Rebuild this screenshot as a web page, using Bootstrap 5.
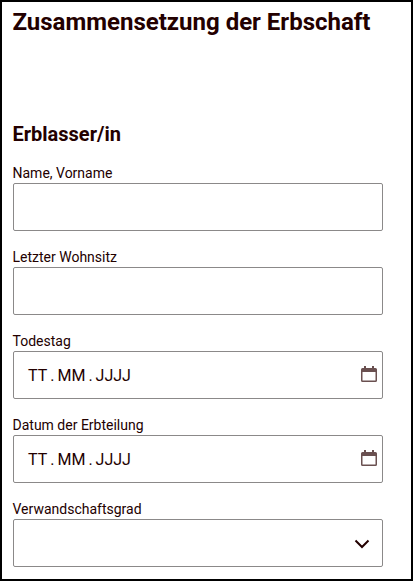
<!DOCTYPE html>
<html lang="de">
<head>
<meta charset="utf-8">
<meta name="viewport" content="width=device-width, initial-scale=1">
<title>Zusammensetzung der Erbschaft</title>
<link href="https://cdn.jsdelivr.net/npm/bootstrap@5.3.0/dist/css/bootstrap.min.css" rel="stylesheet">
<style>
body { font-family: Roboto, "Liberation Sans", sans-serif; color: #230000; }
.form-page { height: 581px; border: 2px solid #000; padding: 4px 28px 0 10.500px; }
.page-title { font-size: 24px; line-height: 32px; height: 113px; font-weight: 700; }
.section-title { font-size: 20px; line-height: 28px; height: 46px; font-weight: 700; padding-top: 1px; }
.field-label { font-size: 14px; line-height: 16px; height: 18px; }
.field-group { height: 84px; }
.field-box { height: 48px; width: 370px; margin-left: .5px; border: 1px solid #8b8989; border-radius: 2px; color: #230000; font-size: 16px; line-height: 24px; padding: 0 5px 0 13px; }
.date-text { padding-top: 2px; }
.date-part { padding: 0 1px; }
.date-dot { padding: 0 2px; }
.select-box { padding-right: 12px; }
</style>
<script src="https://cdn.jsdelivr.net/npm/bootstrap@5.3.0/dist/js/bootstrap.bundle.min.js"></script>
</head>
<body>
<main class="form-page overflow-hidden">
  <h1 class="page-title m-0 text-nowrap">Zusammensetzung der Erbschaft</h1>
  <h2 class="section-title m-0">Erblasser/in</h2>
  <form>
    <div class="field-group">
      <label class="field-label d-block" for="name">Name, Vorname</label>
      <input class="form-control field-box" id="name" type="text">
    </div>
    <div class="field-group">
      <label class="field-label d-block" for="ort">Letzter Wohnsitz</label>
      <input class="form-control field-box" id="ort" type="text">
    </div>
    <div class="field-group">
      <div class="field-label">Todestag</div>
      <div class="field-box d-flex align-items-center">
        <div class="date-text d-flex"><span class="date-part">TT</span><span class="date-dot">.</span><span class="date-part">MM</span><span class="date-dot">.</span><span class="date-part">JJJJ</span></div>
        <svg class="ms-auto" width="16" height="18" viewBox="0 0 16 18" fill="#6a5050"><path fill-rule="evenodd" d="M3 0h2v2h6V0h2v2h1.500A1.500 1.500 0 0 1 16 3.500v11a1.500 1.500 0 0 1-1.500 1.500h-13A1.500 1.500 0 0 1 0 14.500v-11A1.500 1.500 0 0 1 1.500 2H3zM1.500 6v8.500h13V6z"/></svg>
      </div>
    </div>
    <div class="field-group">
      <div class="field-label">Datum der Erbteilung</div>
      <div class="field-box d-flex align-items-center">
        <div class="date-text d-flex"><span class="date-part">TT</span><span class="date-dot">.</span><span class="date-part">MM</span><span class="date-dot">.</span><span class="date-part">JJJJ</span></div>
        <svg class="ms-auto" width="16" height="18" viewBox="0 0 16 18" fill="#6a5050"><path fill-rule="evenodd" d="M3 0h2v2h6V0h2v2h1.500A1.500 1.500 0 0 1 16 3.500v11a1.500 1.500 0 0 1-1.500 1.500h-13A1.500 1.500 0 0 1 0 14.500v-11A1.500 1.500 0 0 1 1.500 2H3zM1.500 6v8.500h13V6z"/></svg>
      </div>
    </div>
    <div class="field-group">
      <div class="field-label">Verwandschaftsgrad</div>
      <div class="field-box select-box d-flex align-items-center justify-content-end">
        <svg width="16" height="12" viewBox="0 0 16 12" fill="none" stroke="#230000" stroke-width="2"><path d="M1.500 3.500 8 10l6.500-6.500"/></svg>
      </div>
    </div>
  </form>
</main>
</body>
</html>
